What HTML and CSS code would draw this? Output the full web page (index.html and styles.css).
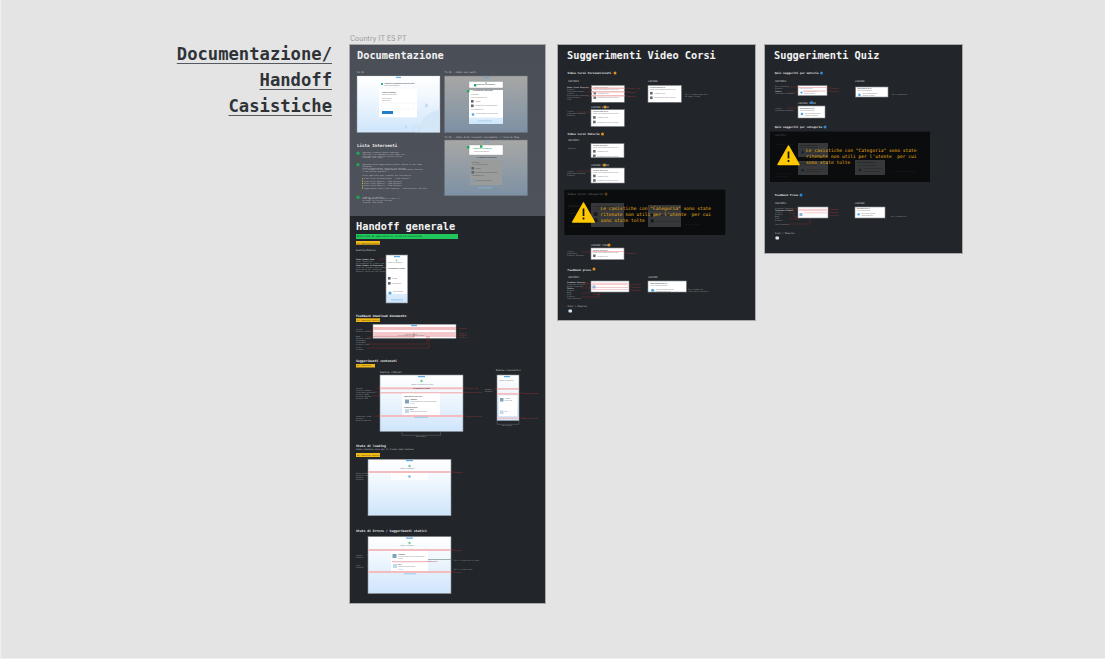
FILE: index.html
```html
<!DOCTYPE html>
<html lang="it">
<head>
<meta charset="utf-8">
<title>Documentazione / Handoff / Casistiche</title>
<link rel="stylesheet" href="styles.css">
</head>
<body>
<main class="canvas">
  <h1 class="page-title"><span>Documentazione/</span><span>Handoff</span><span>Casistiche</span></h1>
  <p class="country">Country IT ES PT</p>

  <section class="board board-main">
    <div class="doc">
      <h2 class="board-title">Documentazione</h2>
      <svg class="art art-doc" viewBox="350 65 195 151" aria-label="Documentazione">
        <defs>
          <linearGradient id="sky" x1="0" y1="0" x2="0" y2="1"><stop offset="0" stop-color="#ffffff"/><stop offset=".35" stop-color="#f1f8fe"/><stop offset="1" stop-color="#cfe5fb"/></linearGradient>
          <linearGradient id="dim" x1="0" y1="0" x2="0" y2="1"><stop offset="0" stop-color="#a7a7a5"/><stop offset="1" stop-color="#7d91a4"/></linearGradient>
          <linearGradient id="cardsky" x1="0" y1="0" x2="0" y2="1"><stop offset="0" stop-color="#ffffff"/><stop offset=".8" stop-color="#ffffff"/><stop offset=".82" stop-color="#dcedfb"/><stop offset="1" stop-color="#cfe5fb"/></linearGradient>
          <symbol id="rows" viewBox="0 0 33 17" preserveAspectRatio="xMinYMin slice">
            <rect width="33" height="17" fill="#fff"/>
            <text class="tk" x="2" y="2.5">Percorsi video per te</text>
            <text class="tm" x="2" y="4.8">Guarda i video consigliati dal tutor per la tua</text>
            <rect x="2" y="6.500" width="2.6" height="2.6" fill="#666d78"/>
            <text class="tm" x="6" y="8.500">Anatomia del cuore</text>
            <rect x="2" y="11" width="2.6" height="2.6" fill="#666d78"/>
            <text class="tm" x="6" y="13">Sistema nervoso centrale e periferico</text>
          </symbol>
          <symbol id="quiz" viewBox="0 0 33 12" preserveAspectRatio="xMinYMin slice">
            <rect width="33" height="12" fill="#fff"/>
            <text class="tk" x="2" y="2.5">Quiz suggeriti per te</text>
            <text class="tm" x="2" y="4.5">Prova i quiz della materia</text>
            <circle cx="4" cy="8" r="1.3" fill="#4da3e6"/>
            <text class="tm" x="7" y="7.5">Quiz di anatomia generale</text>
            <text class="tm" x="7" y="9.5">Ripassa gli argomenti</text>
          </symbol>
        </defs>

        <text class="cap" x="357" y="73">IS 01</text>
        <rect x="357" y="76" width="83" height="56.500" fill="url(#sky)" stroke="#8c9197" stroke-width=".5"/>
        <rect x="357.300" y="76.300" width="82.400" height="1.800" fill="#fff"/>
        <rect x="396" y="76.800" width="5" height="1.300" fill="#6fb4ea"/>
        <path d="M419 132.300A22 22 0 0 1 439.700 110V132.300z" fill="#d4e7f7"/>
        <circle cx="416.500" cy="129" r="3.300" fill="none" stroke="#bcd8ef" stroke-width=".5"/>
        <path d="M425 103l4 2.500-4 2.500zM405 125l3 2-3 2z" fill="#c3dcf1"/>
        <rect x="381" y="83" width="2" height="2" fill="#49b77a"/>
        <text class="tk" x="384.500" y="84">Completa le informazioni sul tuo percorso</text>
        <text class="tm" x="384.500" y="85.800">Indica la tua preparazione</text>
        <rect x="379" y="88.700" width="38" height="28.600" fill="#fff"/>
        <text class="tk" x="382" y="92.500">Prima di continuare</text>
        <text class="tm" x="382" y="94.500">Seleziona il corso di studi</text>
        <text class="tm" x="382" y="98.500">Materia preferita</text>
        <text class="tm" x="382" y="100.500">Anno di corso</text>
        <rect x="382" y="103" width="32" height="6" fill="#fff" stroke="#dfe3e6" stroke-width=".3"/>
        <rect x="382" y="111" width="11" height="3" fill="#1f7ec9"/>

        <text class="cap" x="444.500" y="73">TS 05 - stato sui punti</text>
        <rect x="444.500" y="76" width="83" height="56.500" fill="url(#dim)" stroke="#6f757b" stroke-width=".5"/>
        <rect x="484" y="77" width="5" height="1.200" fill="#6aa3cf"/>
        <rect x="469" y="81.500" width="34" height="6.500" fill="#fff" stroke="#9a9a9a" stroke-width=".4"/>
        <circle cx="486" cy="83" r="1" fill="#9fd3b6"/>
        <text class="tk" x="477" y="84.500">Completa le informazioni</text>
        <rect x="469" y="90" width="34" height="34" fill="url(#cardsky)"/>
        <text class="tkb" x="473" y="91">Le risorse per il tuo corso</text>
        <text class="tm" x="471" y="95">Suggerimenti</text>
        <text class="tm" x="471" y="97.500">Vedi i corsi consigliati per te</text>
        <rect x="471" y="100" width="2.600" height="2.600" fill="#5f6670"/>
        <text class="tm" x="475" y="101.500">Anatomia</text>
        <rect x="471" y="104.500" width="2.600" height="2.600" fill="#5f6670"/>
        <text class="tm" x="475" y="106">Sistema nervoso e apparato endocrino</text>
        <text class="tm" x="471" y="109.500">Quiz consigliati per te</text>
        <circle cx="473" cy="114.500" r="1.300" fill="#4da3e6"/>
        <text class="tm" x="476" y="114">Quiz di anatomia e fisiologia generale</text>
        <rect x="478" y="120.500" width="14" height=".8" fill="#9cc7e8"/>
        <rect x="474" y="84" width="2.400" height="2.400" fill="#1ea65a"/>
        <rect x="467" y="90" width="2.400" height="2.400" fill="#1ea65a"/>

        <text class="cap" x="444.500" y="137.500">TS 05 - stato alla ricevuta (documento) / ricerca fase</text>
        <rect x="444.500" y="140" width="83" height="55.700" fill="url(#dim)" stroke="#6f757b" stroke-width=".5"/>
        <rect x="484" y="141.500" width="5" height="1" fill="#6aa3cf"/>
        <rect x="469" y="145" width="34" height="10" fill="#fff" stroke="#9a9a9a" stroke-width=".4"/>
        <text class="tg" x="473" y="149">Completa il documento</text>
        <text class="tm" x="474" y="152">Indica la tua preparazione</text>
        <text class="tkb" x="477" y="158">Le risorse per il tuo corso</text>
        <rect x="470" y="160" width="32" height="25" fill="#9a9b9b"/>
        <text class="td" x="472" y="163">Suggerimenti</text>
        <text class="td" x="472" y="165">Vedi i corsi consigliati per te</text>
        <rect x="471.500" y="167" width="2.600" height="2.600" fill="#5f6670"/>
        <text class="td" x="475" y="168.500">Anatomia</text>
        <rect x="471.500" y="171" width="2.600" height="2.600" fill="#5f6670"/>
        <text class="td" x="475" y="172.800">Sistema nervoso e apparato endocrino</text>
        <text class="td" x="472" y="176">Quiz consigliati per te</text>
        <circle cx="473.500" cy="181" r="1.300" fill="#6aa3cf"/>
        <text class="td" x="476" y="181">Quiz di anatomia e fisiologia</text>
        <rect x="478" y="187.500" width="14" height=".8" fill="#8fb2cc"/>
        <rect x="467" y="146" width="2.400" height="2.400" fill="#1ea65a"/>
        <rect x="480" y="145.300" width="2.400" height="2.400" fill="#1ea65a"/>

        <text class="sub" x="357" y="146.500">Lista Interventi</text>
        <circle cx="358" cy="153.300" r="1.700" fill="#21a35b"/>
        <text class="tl" x="362.500" y="153">Aggiunto elemento dentro contenuti</text>
        <text class="tl" x="362.500" y="154.800">non trovi la risposta ai tuoi dubbi sul</text>
        <text class="tl" x="362.500" y="156.600">punteggio dei test del profilo della</text>
        <text class="tl" x="362.500" y="158.400">sezione: Vedi Punti</text>
        <circle cx="358" cy="164.700" r="1.700" fill="#21a35b"/>
        <text class="tl" x="362.500" y="165">Aggiunta nuova Suggerimenti globale dentro la voce Home</text>
        <text class="tl" x="362.500" y="166.800">Documenti</text>
        <text class="tl" x="362.500" y="168.600">Questa Suggerimenti contiene una sezione</text>
        <text class="tl" x="362.500" y="170.400">1 le risorse di una Suggerimenti Personalizzate Generale</text>
        <text class="tl" x="362.500" y="172.200">2 una sezione generale</text>
        <text class="tl" x="362.500" y="176">Viene applicato agli elementi del tuo profilo</text>
        <rect x="362" y="178.300" width="1.100" height="1.100" fill="#e0b93c"/><text class="tl" x="364" y="179.400">Video Corsi Personalizzati - Card Generali</text>
        <rect x="362" y="180.600" width="1.100" height="1.100" fill="#e0b93c"/><text class="tl" x="364" y="181.700">Video Corsi Materie - Card Generali</text>
        <rect x="362" y="182.900" width="1.100" height="1.100" fill="#e0b93c"/><text class="tl" x="364" y="184">Video Corsi Materie - Card Generali</text>
        <rect x="362" y="185.200" width="1.100" height="1.100" fill="#e0b93c"/><text class="tl" x="364" y="186.300">Video Corsi Materie - Card Generali</text>
        <rect x="362" y="187.500" width="1.100" height="1.100" fill="#e0b93c"/><text class="tl" x="364" y="188.600">Suggerimenti Video Corsi Generali - Card Generali con Link</text>
        <circle cx="358" cy="197.300" r="1.700" fill="#21a35b"/>
        <text class="tl" x="362.500" y="197.500">Commenti di Handoff</text>
        <text class="tl" x="362.500" y="199.300">Sono aggiornati dentro il caso e il</text>
        <text class="tl" x="362.500" y="201.100">di tutti la ricerca interna</text>
        <text class="tl" x="362.500" y="203">sezione: Vedi Punti</text>
      </svg>
    </div>

    <div class="handoff">
      <h2 class="board-title board-title-tight">Handoff generale</h2>
      <svg class="art art-handoff" viewBox="350 234 195 370" aria-label="Handoff generale">
        <rect x="356" y="234" width="102" height="5" fill="#1fc75c"/>
        <text class="tbar" x="357" y="237.300">Modifiche da applicare su tutte le casistiche</text>
        <rect x="356" y="241" width="24" height="3.700" fill="#f0b91a"/>
        <text class="ttag" x="357" y="243.500">Nel componente generale</text>
        <text class="cap" x="356" y="251">Desktop/Mobile</text>

        <text class="tw" x="356" y="259.500">Stato Header Home</text>
        <text class="t" x="356" y="261.500">Font: Roboto/14</text>
        <text class="t" x="356" y="263.500">Allineamento al centro con</text>
        <text class="tw" x="356" y="265.500">Stato Header di Benvenuto</text>
        <text class="t" x="356" y="267.500">Link per trovare nuovi punti</text>
        <text class="t" x="356" y="269.500">Spaziatura dei contenuti</text>
        <text class="t" x="356" y="271.500">Margine inferiore dal bordo sopra</text>
        <line x1="379" y1="259" x2="386" y2="259" class="red"/>
        <rect x="386" y="255" width="21.700" height="48" fill="url(#cardsky)" stroke="#7f858b" stroke-width=".6"/>
        <rect x="394" y="256" width="6" height="1.200" fill="#5aa9e6"/>
        <circle cx="396.500" cy="260.500" r="1" fill="#9fd3b6"/>
        <text class="tm" x="388" y="263">Completa le informazioni</text>
        <text class="tkb" x="388" y="269">Le risorse per il corso</text>
        <rect x="388" y="277" width="2.600" height="2.600" fill="#5f6670"/><text class="tm" x="391.500" y="279">Anatomia</text>
        <rect x="388" y="282" width="2.600" height="2.600" fill="#5f6670"/><text class="tm" x="391.500" y="284">Sistema nervoso</text>
        <circle cx="390" cy="293" r="1.600" fill="#4da3e6"/><text class="tm" x="393" y="292">Quiz di anatomia</text>
        <rect x="391" y="299.500" width="12" height=".8" fill="#8cbde3"/>

        <text class="subs" x="356" y="316.500">Feedback download documento</text>
        <rect x="356" y="318.300" width="24" height="3.700" fill="#f0b91a"/>
        <text class="ttag" x="357" y="320.800">Nel componente generale</text>
        <text class="t" x="356" y="330">Layout</text><text class="t" x="356" y="332">Default Header</text>
        <text class="t" x="356" y="337">Body</text><text class="t" x="356" y="339">Default Center</text>
        <text class="t" x="356" y="341">Messaggio</text><text class="t" x="356" y="343">Contenuto</text><text class="t" x="356" y="345">Default Link</text>
        <text class="t" x="356" y="347.500">Close</text><text class="t" x="356" y="349.500">Default</text>
        <rect x="373" y="324.300" width="83" height="14" fill="#fdfdfd" stroke="#8b9096" stroke-width=".5"/>
        <rect x="373" y="327" width="83" height="3" fill="#f3bdc0"/>
        <rect x="373" y="332" width="83" height="5" fill="#f4c8ca"/>
        <rect x="411" y="325" width="6" height="1.200" fill="#5aa9e6"/>
        <text class="tm" x="405" y="334.500">Documento scaricato</text>
        <text class="tm" x="398" y="336.300">Trovi il documento nella cartella dei download</text>
        <path class="red" d="M367 331h6M367 337h47v-4M367 344h60v-8M367 348h62v-12"/>
        <text class="tr" x="459" y="329">Margine</text>
        <text class="tr" x="459" y="334">Margine</text>
        <text class="tr" x="459" y="336">Margine</text>
        <text class="tr" x="459" y="338">Margine</text>

        <text class="subs" x="356" y="361.500">Suggerimenti contenuti</text>
        <rect x="356" y="364" width="19" height="3.500" fill="#f0b91a"/>
        <text class="ttag" x="357" y="366.400">Nel componente</text>
        <text class="cap" x="380" y="373">Desktop (tablet)</text>
        <text class="cap" x="496" y="371">Mobile (recuisito)</text>

        <text class="t" x="356" y="389">Layout</text><text class="t" x="356" y="391">Default Header</text>
        <text class="t" x="356" y="393">Contenuto generale</text><text class="t" x="356" y="395">Default Body</text>
        <text class="t" x="356" y="397">Altezza minima</text><text class="t" x="356" y="399">Default 600</text>
        <text class="t" x="356" y="417">Gradiente body</text><text class="t" x="356" y="419">Lineare</text><text class="t" x="356" y="421">Bianco/Azzurro</text>
        <path class="red" d="M376 388h4M374 392h6M372 396h8M374 416h6"/>
        <rect x="380" y="375" width="83" height="56.500" fill="url(#sky)" stroke="#8b9096" stroke-width=".6"/>
        <rect x="418" y="376" width="7" height="1.200" fill="#5aa9e6"/>
        <circle cx="421.500" cy="381" r="1.300" fill="#7cc9a0"/>
        <text class="tm" x="411" y="384.500">Completa le informazioni del tuo profilo</text>
        <rect x="380" y="387.300" width="83" height="2" fill="#f3bdc0"/>
        <text class="tkb" x="413" y="389">Le risorse per il corso</text>
        <rect x="380" y="392" width="83" height="1.500" fill="#f3bdc0"/>
        <rect x="402" y="393.500" width="38" height="21.500" fill="#fff"/>
        <text class="tk" x="404" y="397">Suggerimenti Video Corsi</text>
        <rect x="405" y="399.500" width="4" height="4" fill="#7fa3bf"/>
        <text class="tk" x="410" y="400">Anatomia</text>
        <text class="tm" x="410" y="402">Lezioni consigliate per il tuo percorso di studio</text>
        <text class="tl2" x="410" y="404">Vedi tutti</text>
        <text class="tk" x="404" y="407.500">Suggerimenti Quiz</text>
        <rect x="405" y="409" width="4" height="4" fill="#bcd9ef"/>
        <text class="tk" x="410" y="410">Quiz</text>
        <text class="tm" x="410" y="412">Ripassa con un quiz generale</text>
        <rect x="380" y="415" width="83" height="2" fill="#f3bdc0"/>
        <rect x="414" y="416.800" width="14" height=".8" fill="#8cbde3"/>
        <path class="red" d="M463 388h3M463 392.500h3M463 416h3"/>
        <text class="tr" x="466" y="389">Margine top</text>
        <text class="tr" x="466" y="393">Margine bottom</text>
        <text class="tr" x="466" y="417">Margine bottom</text>
        <path class="grey" d="M402 432v3.300h38.500v-3.300"/>
        <text class="t" x="416" y="437">Max-width</text>

        <text class="t" x="485" y="390">Layout</text><text class="t" x="485" y="392">Default</text>
        <line class="red" x1="493" y1="389" x2="497" y2="389"/>
        <rect x="497" y="375" width="22" height="45.700" fill="url(#sky)" stroke="#8b9096" stroke-width=".6"/>
        <rect x="504" y="376" width="6" height="1.200" fill="#5aa9e6"/>
        <text class="tm" x="499" y="381">Completa le informazioni</text>
        <rect x="497" y="388" width="22" height="1.800" fill="#f3bdc0"/>
        <rect x="497" y="393" width="22" height="1.800" fill="#f3bdc0"/>
        <rect x="499" y="396" width="18" height="20" fill="#fff"/>
        <rect x="500" y="398" width="3.500" height="3.500" fill="#7fa3bf"/>
        <text class="tm" x="504.500" y="399">Anatomia</text>
        <text class="tm" x="504.500" y="401">Lezioni video</text>
        <rect x="500" y="410.500" width="3.500" height="3.500" fill="#bcd9ef"/>
        <text class="tm" x="504.500" y="412">Quiz</text>
        <rect x="497" y="417.500" width="22" height="1.300" fill="#f3bdc0"/>
        <path class="red" d="M519 393h4M519 418h5"/>
        <text class="tr" x="523" y="394">Margine bottom</text>
        <text class="tr" x="522" y="419">Margine bottom</text>
        <path class="grey" d="M497 421v3.300h22v-3.300"/>
        <text class="t" x="502" y="426">Max-width</text>

        <text class="subs" x="356" y="447">Stato di loading</text>
        <text class="t2" x="356" y="450">Viene visibile solo per il flusso Vedi Lezione</text>
        <rect x="356" y="453" width="24" height="4" fill="#f0b91a"/>
        <text class="ttag" x="357" y="455.500">Nel componente generale</text>
        <text class="t" x="356" y="474">Stato Header</text><text class="t" x="356" y="476">Default Loading</text><text class="t" x="356" y="478">Spinner</text><text class="t" x="356" y="480">Default</text>
        <path class="grey" d="M372 477h19"/>
        <rect x="368" y="459.300" width="83" height="56.400" fill="url(#sky)" stroke="#8b9096" stroke-width=".6"/>
        <rect x="406" y="460" width="7" height="1.200" fill="#5aa9e6"/>
        <circle cx="409.500" cy="466" r="1.200" fill="#7cc9a0"/>
        <text class="tm" x="400" y="468.500">Completa le informazioni</text>
        <rect x="368" y="471" width="83" height="2" fill="#f3bdc0"/>
        <rect x="391" y="473" width="37" height="7" fill="#fff"/>
        <circle cx="409.500" cy="476.500" r="1.200" fill="#6fb4ea"/>
        <path class="red" d="M451 472h4"/>
        <text class="tr" x="455" y="473">Margine</text>

        <text class="subs" x="356" y="531.500">Stato di Errore / Suggerimenti statici</text>
        <text class="t" x="356" y="556">Layout</text><text class="t" x="356" y="558">Default</text>
        <text class="t" x="356" y="566">Tipo</text><text class="t" x="356" y="568">Default</text>
        <path class="grey" d="M367 555.500h24M367 566h24"/>
        <rect x="368" y="536.700" width="83" height="56.800" fill="url(#sky)" stroke="#8b9096" stroke-width=".6"/>
        <rect x="406" y="537.500" width="7" height="1.200" fill="#5aa9e6"/>
        <circle cx="409.500" cy="543" r="1.200" fill="#7cc9a0"/>
        <text class="tm" x="400" y="546">Completa le informazioni</text>
        <rect x="368" y="549" width="83" height="2" fill="#f3bdc0"/>
        <rect x="391" y="551" width="37" height="21" fill="#fff"/>
        <rect x="392.500" y="554" width="4" height="4" fill="#7fa3bf"/>
        <text class="tk" x="398" y="555">Anatomia</text>
        <text class="tm" x="398" y="557">Lezioni consigliate per il tuo percorso di studio</text>
        <text class="tm" x="398" y="559">Vedi tutti</text>
        <rect x="392" y="561" width="35" height="1.300" fill="#f3bdc0"/>
        <rect x="393" y="564" width="4" height="4" fill="#bcd9ef"/>
        <text class="tk" x="398" y="565">Quiz</text>
        <text class="tm" x="398" y="567">Ripassa con un quiz generale</text>
        <text class="tl2" x="398" y="569.500">Vedi tutti</text>
        <rect x="368" y="571" width="83" height="2" fill="#f3bdc0"/>
        <rect x="404" y="573.500" width="12" height=".8" fill="#8cbde3"/>
        <path class="red" d="M451 550h3M451 572h3M427 561.500h3"/>
        <path d="M428 559.500h24" stroke="#4c6e5d" stroke-width=".5"/>
        <text class="tr" x="454" y="551">Margine</text>
        <text class="tr" x="430" y="562">Margine</text>
        <text class="tr" x="454" y="572.500">Margine</text>
        <text class="t" x="454" y="560.500">Per il testo della card</text>
        <text class="t" x="454" y="569.500">Per il testo quiz</text>
      </svg>
    </div>
  </section>

  <section class="board board-video">
    <h2 class="board-title">Suggerimenti Video Corsi</h2>
    <svg class="art art-video" viewBox="558 65 197 255" aria-label="Suggerimenti Video Corsi">
      <text class="subx" x="567.500" y="74">Video Corsi Personalizzati</text><circle class="or" cx="615" cy="73" r="1.500"/>
      <text class="cap" x="568" y="82">ANATOMIA</text><text class="cap" x="648" y="82">LEZIONI</text>
      <text class="tw" x="567" y="88">Video Corsi Generali</text><text class="t" x="567" y="90">Default</text><text class="t" x="567" y="92">Contenuto Header</text>
      <text class="t" x="567" y="94">Titolo</text><text class="t" x="567" y="96">Descrizione Generale</text><text class="t" x="567" y="98">Card Default</text><text class="t" x="567" y="100">Link</text>
      <path class="red" d="M582 88h9M586 92h5M586 96h5"/>
      <use href="#rows" x="591.500" y="85.300" width="33" height="17"/>
      <rect x="591.500" y="85.300" width="33" height="17" class="frame"/>
      <rect x="591.500" y="87.500" width="33" height="1.500" fill="#f3bdc0"/>
      <rect x="591.500" y="91" width="33" height="1.500" fill="#f3bdc0"/>
      <rect x="591.500" y="95" width="33" height="1.500" fill="#f3bdc0"/>
      <path class="red" d="M624.500 88h4M624.500 92h4M624.500 96h4"/>
      <text class="tr" x="628" y="89">Margine top</text><text class="tr" x="628" y="93">Margine</text><text class="tr" x="628" y="97">Margine</text>
      <use href="#rows" x="648" y="85.300" width="33.500" height="17"/>
      <rect x="648" y="85.300" width="33.500" height="17" class="frame"/>
      <text class="t" x="685" y="95">Per il tutor generale</text><text class="t" x="685" y="97">Allegati Video</text>

      <text class="cap" x="591" y="108">LEZIONI VIDEO</text><circle class="or" cx="605" cy="107" r="1.500"/>
      <text class="t" x="567" y="112">Titolo</text><text class="t" x="567" y="114">Contenuto Default</text><text class="t" x="567" y="116">Default</text>
      <path class="red" d="M577 112h14"/>
      <use href="#rows" x="591" y="109.500" width="33.500" height="17"/><rect x="591" y="109.500" width="33.500" height="17" class="frame"/>

      <text class="subx" x="567.500" y="135">Video Corsi Materia</text><circle class="or" cx="602.500" cy="134" r="1.500"/>
      <text class="cap" x="568" y="141">ANATOMIA</text>
      <text class="t" x="568" y="148.500">Default</text>
      <use href="#rows" x="591" y="143.500" width="33" height="14"/><rect x="591" y="143.500" width="33" height="14" class="frame"/>
      <text class="cap" x="591" y="166">LEZIONI VIDEO</text><circle class="or" cx="604.500" cy="165" r="1.500"/>
      <text class="t" x="567" y="172">Titolo</text><text class="t" x="567" y="174">Contenuto Default</text><text class="t" x="567" y="176">Default</text>
      <path class="red" d="M577 171h14"/>
      <use href="#rows" x="591" y="168" width="33.500" height="15"/><rect x="591" y="168" width="33.500" height="15" class="frame"/>

      <text class="cap" x="568" y="207">ANATOMIA</text><text class="t" x="568" y="214">Contenuto Default</text><text class="t" x="568" y="222">Titolo Default</text><text class="t" x="568" y="227">Card Generale</text>
      <text class="t" x="685" y="215">Per il tutor generale</text><text class="t" x="685" y="225">Allegati Video</text>
      <use href="#rows" x="591" y="203" width="33" height="24"/>
      <use href="#rows" x="648" y="205" width="33" height="22"/>
      <rect x="564.300" y="189.700" width="161" height="45.300" class="veil"/>
      <text class="subd" x="567.500" y="195">Video Corsi Categoria</text><circle cx="606" cy="194" r="1.500" fill="#5e4310"/>
      <path class="warn" d="M583.500 203l10.800 19h-21.600z"/>
      <path d="M583.500 208.500v7.500M583.500 217.500v2" stroke="#111" stroke-width="1.700"/>
      <text class="warnt" x="600.500" y="209.500">Le casistiche con "Categoria" sono state</text>
      <text class="warnt" x="600.500" y="215.500" xml:space="preserve">ritenute non utili per l'utente  per cui</text>
      <text class="warnt" x="600.500" y="221.500">sono state tolte</text>

      <text class="cap" x="591" y="246">LEZIONI VIDEO</text><circle class="or" cx="609" cy="245" r="1.500"/>
      <text class="t" x="567" y="252">Titolo</text><text class="t" x="567" y="254">Contenuto</text><text class="t" x="567" y="256">Default Generale</text>
      <path class="red" d="M582 252h9M624 253h5"/>
      <use href="#rows" x="591" y="248" width="33" height="11.500"/><rect x="591" y="248" width="33" height="11.500" class="frame"/>
      <rect x="591" y="251" width="33" height="1" fill="#f3bdc0"/>
      <text class="tr" x="628" y="254">Margine</text>

      <text class="subx" x="567.500" y="270.500">Feedback prove</text><circle class="or" cx="594" cy="269" r="1.500"/>
      <text class="cap" x="568" y="277.500">ANATOMIA</text><text class="cap" x="648" y="277.500">LEZIONI</text>
      <text class="tw" x="567" y="283">Feedback Generali</text><text class="t" x="567" y="285">Contenuto Default</text><text class="t" x="567" y="287">Header Generale</text><text class="tw" x="567" y="289">Titolo</text>
      <text class="t" x="567" y="291">Default</text><text class="t" x="567" y="293">Body</text><text class="t" x="567" y="295">Link</text><text class="t" x="567" y="297">Default</text><text class="t" x="567" y="299">Card Generale</text>
      <path class="red" d="M581 283h10M581 288h6v-4h4M581 293h8v-6h2M581 297h18v-5"/>
      <rect x="591" y="281" width="38" height="11" fill="#fff"/>
      <rect x="592" y="282.800" width="36" height=".9" fill="#f3bdc0"/><rect x="592" y="284.300" width="36" height=".8" fill="#f3bdc0"/><rect x="592" y="287" width="36" height=".8" fill="#f3bdc0"/><rect x="592" y="289.300" width="36" height=".8" fill="#f3bdc0"/>
      <rect x="592.500" y="285.500" width="3" height="3" fill="#8fb7d6"/>
      <rect x="591" y="281" width="38" height="11" class="frame"/>
      <path class="red" d="M629 285h4M629 287h4M629 290h4"/>
      <text class="tr" x="633" y="285">Margine</text><text class="tr" x="633" y="288">Margine</text><text class="tr" x="633" y="291">Margine</text>
      <text class="tr" x="593" y="295">Margine</text>
      <use href="#quiz" x="648" y="281" width="38.500" height="11"/><rect x="648" y="281" width="38.500" height="11" class="frame"/>
      <text class="t" x="688" y="290">Per la materia</text><text class="t" x="688" y="292">Tutor Quiz Generali</text>
      <text class="cap" x="567.500" y="307">Icon / Chevron</text>
      <rect x="568.500" y="309.500" width="3.500" height="3" rx=".8" fill="#cfe3f3"/>
    </svg>
  </section>

  <section class="board board-quiz">
    <h2 class="board-title">Suggerimenti Quiz</h2>
    <svg class="art art-quiz" viewBox="765 65 197 188" aria-label="Suggerimenti Quiz">
      <text class="subx" x="774.700" y="74">Quiz suggeriti per materia</text><circle class="bl" cx="821.500" cy="73" r="1.500"/>
      <text class="cap" x="775" y="82">ANATOMIA</text><text class="cap" x="855" y="82">LEZIONI</text>
      <text class="t" x="775" y="87">Quiz Generali</text><text class="t" x="775" y="89">Default</text><text class="tw" x="775" y="92">Titolo</text><text class="t" x="775" y="94">Contenuto Generale</text>
      <path class="red" d="M788 87h10M788 92h10"/>
      <use href="#quiz" x="798" y="85.500" width="29" height="10"/><rect x="798" y="85.500" width="29" height="10" class="frame"/>
      <rect x="798" y="87" width="29" height="1" fill="#f3bdc0"/><rect x="803" y="90.500" width="23" height="1" fill="#f3bdc0"/>
      <path class="red" d="M827 88h4M827 91h4"/><text class="tr" x="831" y="88.500">Margine</text><text class="tr" x="831" y="91.500">Margine</text>
      <use href="#quiz" x="855.500" y="87" width="32.500" height="10"/><rect x="855.500" y="87" width="32.500" height="10" class="frame"/>
      <text class="t" x="892" y="94.500">Per la materia</text>
      <text class="cap" x="798" y="103.500">LEZIONI VIDEO</text><circle class="bl" cx="811.500" cy="102.500" r="1.500"/>
      <text class="t" x="775" y="109">Titolo</text><text class="t" x="775" y="111">Contenuto Default</text>
      <path class="red" d="M787 108h11"/>
      <use href="#quiz" x="798" y="106" width="27" height="12"/><rect x="798" y="106" width="27" height="12" class="frame"/>

      <text class="subx" x="774.700" y="128">Quiz suggeriti per categoria</text><circle class="bl" cx="825" cy="127" r="1.500"/>
      <text class="t" x="775" y="145">Contenuto Default</text><text class="t" x="775" y="174">Titolo Default</text><text class="t" x="775" y="177">Card Generale</text>
      <text class="t" x="891" y="172">Per la materia generale</text>
      <use href="#quiz" x="798" y="143" width="30" height="14"/>
      <use href="#quiz" x="798" y="161" width="30" height="14"/>
      <use href="#quiz" x="855" y="160" width="30" height="15"/>
      <rect x="770" y="131.500" width="160" height="50.500" class="veil"/>
      <text class="capd" x="775" y="136">ANATOMIA</text>
      <path class="warn" d="M788.500 146l10.500 18.500h-21z"/>
      <path d="M788.500 151.500v7M788.500 160v2" stroke="#111" stroke-width="1.700"/>
      <text class="warnt" x="806" y="152">Le casistiche con "Categoria" sono state</text>
      <text class="warnt" x="806" y="158" xml:space="preserve">ritenute non utili per l'utente  per cui</text>
      <text class="warnt" x="806" y="164">sono state tolte</text>

      <text class="subx" x="774.700" y="196">Feedback Prove</text><circle class="bl" cx="801" cy="195" r="1.500"/>
      <text class="cap" x="775" y="204">ANATOMIA</text><text class="cap" x="855" y="204">LEZIONI</text>
      <text class="t" x="775" y="209">Feedback Generale</text><text class="tw" x="775" y="211">Contenuto Default</text><text class="t" x="775" y="213">Titolo</text><text class="t" x="775" y="215">Default</text><text class="t" x="775" y="217">Body</text><text class="t" x="775" y="219">Link</text><text class="t" x="775" y="221">Default</text><text class="t" x="775" y="225">Card Generale</text>
      <path class="red" d="M789 209h9M789 213h5v4h4M789 219h10v-2M789 224h21v-6"/>
      <rect x="798" y="207" width="30" height="11" fill="#fff"/>
      <rect x="799" y="208.800" width="28" height=".9" fill="#f3bdc0"/><rect x="799" y="210.300" width="28" height=".8" fill="#f3bdc0"/><rect x="804" y="212.500" width="23" height=".8" fill="#f3bdc0"/>
      <rect x="799.500" y="213" width="3" height="3" fill="#8fb7d6"/>
      <rect x="798" y="207" width="30" height="11" class="frame"/>
      <path class="red" d="M828 209h3M828 212h3M828 215h3"/>
      <text class="tr" x="831" y="210">Margine</text><text class="tr" x="831" y="213">Margine</text><text class="tr" x="831" y="216">Margine</text>
      <use href="#quiz" x="855" y="207" width="30" height="11"/><rect x="855" y="207" width="30" height="11" class="frame"/>
      <text class="t" x="891" y="217">Per la materia</text>
      <text class="cap" x="775" y="234">Icon / Chevron</text>
      <rect x="775.500" y="236.500" width="3.500" height="3" rx=".8" fill="#dbe8f3"/>
    </svg>
  </section>
</main>
</body>
</html>
```
FILE: styles.css
```css
html, body {
  margin: 0;
  padding: 0;
  height: 100%;
  overflow: hidden;
}

body {
  background: #e4e4e4;
  font-family: "DejaVu Sans Mono", "Liberation Mono", monospace;
}

.canvas {
  position: relative;
  width: 1105px;
  height: 659px;
  box-sizing: border-box;
  border-left: 1px solid #f0f0f0;
  border-bottom: 1px solid #f0f0f0;
  overflow: hidden;
}

.page-title {
  position: absolute;
  right: 773px;
  top: 41px;
  margin: 0;
  display: flex;
  flex-direction: column;
  align-items: flex-end;
  font-size: 17.200px;
  line-height: 26px;
  font-weight: 700;
  color: #2f3338;
}

.page-title span {
  text-decoration: underline;
  text-decoration-thickness: 1px;
  text-decoration-color: #555a60;
  text-underline-offset: 3px;
}

.country {
  position: absolute;
  left: 349px;
  top: 34px;
  margin: 0;
  font: 7px/10px Inter, "Liberation Sans", sans-serif;
  color: #9b9b9b;
}

.board {
  position: absolute;
  top: 44px;
  border: 1px solid #a9a9a9;
  background: #22262a;
  box-sizing: content-box;
}

.board-main { left: 348px; width: 195px; height: 558px; }
.board-video { left: 556px; width: 197px; height: 275px; }
.board-quiz { left: 763px; width: 197px; height: 208px; }

.doc {
  height: 171px;
  background: linear-gradient(#4a4e56, #4e525a);
}

.handoff { height: 387px; overflow: hidden; }

.board-title {
  margin: 0;
  height: 20px;
  padding-left: 7px;
  font-size: 10.300px;
  line-height: 20px;
  font-weight: 700;
  color: #f2f2f2;
  white-space: nowrap;
}

.board-video .board-title,
.board-quiz .board-title { padding-left: 9px; }

.board-title-tight {
  height: 16px;
  padding-top: 2px;
  padding-left: 6px;
  line-height: 16px;
}

.art { display: block; width: 100%; }
.art-doc { height: 151px; }
.art-handoff { height: 370px; }
.art-video { height: 255px; }
.art-quiz { height: 188px; }

svg text {
  font-family: "DejaVu Sans Mono", "Liberation Mono", monospace;
  white-space: pre;
}

.cap { font-size: 2.300px; fill: #c9cbcd; }
.capd { font-size: 2.300px; fill: #4d4f51; }
.sub { font-size: 4.200px; font-weight: 700; fill: #eceded; }
.subs { font-size: 3.100px; font-weight: 700; fill: #e4e5e6; }
.subx { font-size: 2.800px; font-weight: 700; fill: #e4e5e6; }
.subd { font-size: 2.800px; font-weight: 700; fill: #55575a; }
.t { font-size: 1.800px; fill: #9da0a3; }
.t2 { font-size: 2.100px; fill: #c9cbcd; }
.tw { font-size: 1.800px; font-weight: 700; fill: #d8dadc; }
.tl { font-size: 1.800px; fill: #c3c6ca; }
.tk { font-size: 1.500px; font-family: "Liberation Sans", sans-serif; fill: #555; font-weight: 700; }
.tkb { font-size: 1.600px; font-family: "Liberation Sans", sans-serif; fill: #333; font-weight: 700; }
.tm { font-size: 1.300px; font-family: "Liberation Sans", sans-serif; fill: #777; }
.tg { font-size: 1.700px; font-family: "Liberation Sans", sans-serif; fill: #31a86a; font-weight: 700; }
.td { font-size: 1.300px; font-family: "Liberation Sans", sans-serif; fill: #555; }
.tl2 { font-size: 1.300px; font-family: "Liberation Sans", sans-serif; fill: #4d9ee0; }
.tr { font-size: 1.800px; fill: #a33a3f; }
.tbar { font-size: 2.400px; fill: #0a3a1d; }
.ttag { font-size: 1.700px; fill: #4f3903; }

.red { fill: none; stroke: #8e2f35; stroke-width: .4; }
.grey { fill: none; stroke: #777b80; stroke-width: .4; }
.frame { fill: none; stroke: #8d9196; stroke-width: .6; }
.or { fill: #e0911a; }
.bl { fill: #2f86d6; }
.veil { fill: #050607; fill-opacity: .8; }
.warn { fill: #ffc800; stroke: #ffc800; stroke-width: 1.500; stroke-linejoin: round; }
.warnt { font-size: 4.600px; fill: #efb40f; }
```
